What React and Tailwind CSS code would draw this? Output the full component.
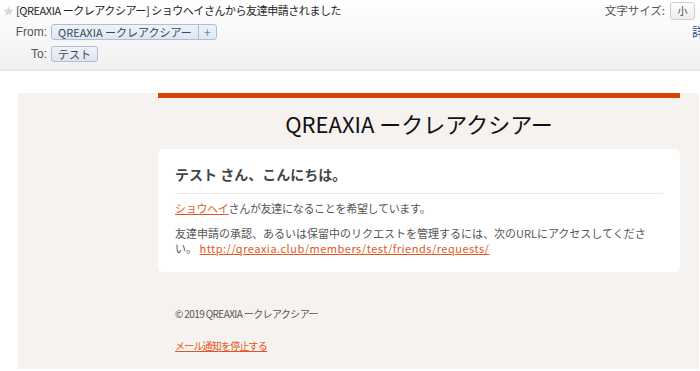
import React from "react";

const jp = { fontFamily: '"Noto Sans CJK JP", "Noto Sans", sans-serif' };

const Pill = ({ children, plus }) => (
  <span className="flex h-[16px] items-center rounded-[3px] border border-[#aebfd5] bg-gradient-to-b from-[#eef3f9] to-[#dde6f1] text-[11px] leading-none text-[#3a4656]">
    <span className="px-[6px]">{children}</span>
    {plus && (
      <span className="flex h-full w-[18px] items-center justify-center border-l border-[#aebfd5] text-[12px] text-[#6f86a3]">
        +
      </span>
    )}
  </span>
);

export default function App() {
  return (
    <div className="h-[371px] w-[700px] overflow-hidden bg-white" style={jp}>
      {/* mail header */}
      <div className="h-[71px] border-b-2 border-[#e6e6e6] bg-gradient-to-b from-white to-[#f1f1f1]">
        <div className="flex h-[20px] items-center pl-[3px] pt-[1px]">
          <span className="w-[13px] text-[11px] text-[#d5d5d5]">★</span>
          <span className="text-[11px] tracking-[-0.45px] text-[#222]">
            [QREAXIA ークレアクシアー] ショウヘイさんから友達申請されました
          </span>
          <span className="ml-auto text-[11.5px] text-[#555]">文字サイズ:</span>
          <span className="ml-[5px] mr-[5px] flex h-[18px] w-[25px] items-center justify-center rounded-[3px] border border-[#d0d0d0] bg-gradient-to-b from-white to-[#ececec] text-[10px] text-[#444]">
            小
          </span>
        </div>
        <div className="mt-[4px] flex h-[16px] items-center">
          <span className="w-[47px] text-right text-[12px] text-[#555]" style={{ fontFamily: '"Liberation Sans", sans-serif' }}>
            From:
          </span>
          <span className="ml-[4px]">
            <Pill plus>QREAXIA ークレアクシアー</Pill>
          </span>
          <span className="ml-auto w-[8px] overflow-hidden text-[12px] leading-none text-[#23478f]">詳</span>
        </div>
        <div className="mt-[6px] flex h-[16px] items-center">
          <span className="w-[47px] text-right text-[12px] text-[#555]" style={{ fontFamily: '"Liberation Sans", sans-serif' }}>
            To:
          </span>
          <span className="ml-[4px]">
            <Pill>テスト</Pill>
          </span>
        </div>
      </div>

      {/* mail body */}
      <div className="h-[22px]" />
      <div className="ml-[18px] mr-[1px] h-[276px] bg-[#f5f2ef] pl-[140px]">
        <div className="h-[5px] w-[522px] bg-[#d64500]" />
        <div className="flex h-[51px] w-[522px] items-center justify-center text-[22px] text-[#111]">
          QREAXIA ークレアクシアー
        </div>
        <div className="w-[522px] rounded-[5px] bg-white px-[17px] pb-[16px] pt-[15px]">
          <div className="pb-[9px] text-[14px] font-semibold leading-[20px] text-[#444]">
            テスト さん、こんにちは。
          </div>
          <div className="border-t border-[#ececec]" />
          <p className="mt-[7px] text-[11px] leading-[15px] tracking-[-0.3px] text-[#555]">
            <a className="text-[#e4571e] underline">ショウヘイ</a>さんが友達になることを希望しています。
          </p>
          <p className="mt-[10px] max-w-[474px] text-[11px] leading-[15px] text-[#555]">
            友達申請の承認、あるいは保留中のリクエストを管理するには、次のURLにアクセスしてください。{" "}
            <a className="tracking-[0.5px] text-[#e4571e] underline">http://qreaxia.club/members/test/friends/requests/</a>
          </p>
        </div>
        <div className="pl-[17px] pt-[35px] text-[10px] leading-[14px] tracking-[-0.6px] text-[#555]">
          © 2019 QREAXIA ークレアクシアー
        </div>
        <div className="pl-[17px] pt-[18px] text-[10px] leading-[14px] tracking-[-0.8px]">
          <a className="text-[#e4571e] underline">メール通知を停止する</a>
        </div>
      </div>
    </div>
  );
}
